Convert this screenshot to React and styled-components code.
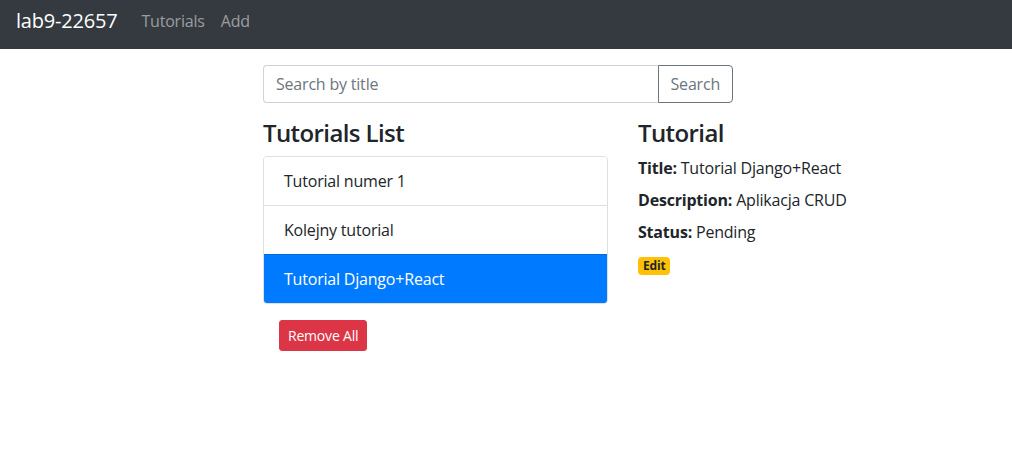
import React from 'react';
import styled, { createGlobalStyle } from 'styled-components';

const GlobalStyle = createGlobalStyle`
  *, *::before, *::after { box-sizing: border-box; }
  body {
    margin: 0;
    font-family: "Open Sans", "Noto Sans", "Liberation Sans", sans-serif;
    font-size: 16px;
    line-height: 1.5;
    letter-spacing: -0.2px;
    color: #212529;
    background: #fff;
  }
`;

const tutorials = ['Tutorial numer 1', 'Kolejny tutorial', 'Tutorial Django+React'];

const App = () => (
  <>
    <GlobalStyle />
    <Navbar>
      <Brand href='#'>lab9-22657</Brand>
      <NavLink href='#'>Tutorials</NavLink>
      <NavLink href='#'>Add</NavLink>
    </Navbar>
    <Main>
      <Row>
        <SearchCol>
          <InputGroup>
            <SearchInput placeholder='Search by title' />
            <SearchButton>Search</SearchButton>
          </InputGroup>
        </SearchCol>
        <Col>
          <Heading>Tutorials List</Heading>
          <ListGroup>
            {tutorials.map((t, i) => (
              <ListItem key={t} active={i === 2}>{t}</ListItem>
            ))}
          </ListGroup>
          <RemoveButton>Remove All</RemoveButton>
        </Col>
        <Col>
          <Heading>Tutorial</Heading>
          <Field><Label>Title:</Label> Tutorial Django+React</Field>
          <Field><Label>Description:</Label> Aplikacja CRUD</Field>
          <Field><Label>Status:</Label> Pending</Field>
          <Badge href='#'>Edit</Badge>
        </Col>
      </Row>
    </Main>
  </>
);

const Navbar = styled.nav`
  height: 49px;
  background: #343a40;
  display: flex;
  align-items: center;
  padding: 0 16px 8px;
`;

const Brand = styled.a`
  color: #fff;
  font-size: 20px;
  line-height: 30px;
  text-decoration: none;
  margin-right: 16px;
`;

const NavLink = styled.a`
  color: rgba(255, 255, 255, 0.5);
  text-decoration: none;
  padding: 0 8px;
`;

const Main = styled.div`
  padding-top: 16px;
  padding-left: 248px;
`;

const Row = styled.div`
  width: 750px;
  display: flex;
  flex-wrap: wrap;
`;

const SearchCol = styled.div`
  width: 66.6667%;
  padding: 0 15px;
  margin-bottom: 16px;
`;

const Col = styled.div`
  width: 50%;
  padding: 0 15px;
`;

const InputGroup = styled.div`
  display: flex;
  height: 38px;
`;

const SearchInput = styled.input`
  flex: 1;
  min-width: 0;
  border: 1px solid #ced4da;
  border-right: none;
  border-radius: 4px 0 0 4px;
  padding: 6px 12px;
  font: inherit;
  letter-spacing: inherit;
  color: #495057;
  &::placeholder { color: #6c757d; }
`;

const SearchButton = styled.button`
  font: inherit;
  letter-spacing: inherit;
  color: #6c757d;
  background: transparent;
  border: 1px solid #6c757d;
  border-radius: 0 4px 4px 0;
  padding: 6px 12px;
`;

const Heading = styled.h4`
  margin: 0 0 8px;
  font-size: 24px;
  font-weight: 600;
  letter-spacing: -0.6px;
  line-height: 1.2;
`;

const ListGroup = styled.ul`
  list-style: none;
  margin: 0;
  padding: 0;
  border-radius: 4px;
  overflow: hidden;
  border: 1px solid rgba(0, 0, 0, 0.125);
`;

const ListItem = styled.li`
  padding: 12px 20px;
  background: ${p => (p.active ? '#007bff' : '#fff')};
  color: ${p => (p.active ? '#fff' : '#212529')};
  & + & { border-top: 1px solid rgba(0, 0, 0, 0.125); }
`;

const RemoveButton = styled.button`
  margin: 16px;
  font: inherit;
  font-size: 14px;
  letter-spacing: inherit;
  line-height: 1.5;
  padding: 4px 8px;
  color: #fff;
  background: #dc3545;
  border: 1px solid #dc3545;
  border-radius: 3px;
`;

const Field = styled.div`
  margin-bottom: 8px;
`;

const Label = styled.strong`
  font-weight: 700;
`;

const Badge = styled.a`
  display: inline-block;
  font-size: 12px;
  font-weight: 700;
  line-height: 1;
  padding: 3px 5px;
  border-radius: 4px;
  background: #ffc107;
  color: #212529;
  text-decoration: none;
`;

export default App;
